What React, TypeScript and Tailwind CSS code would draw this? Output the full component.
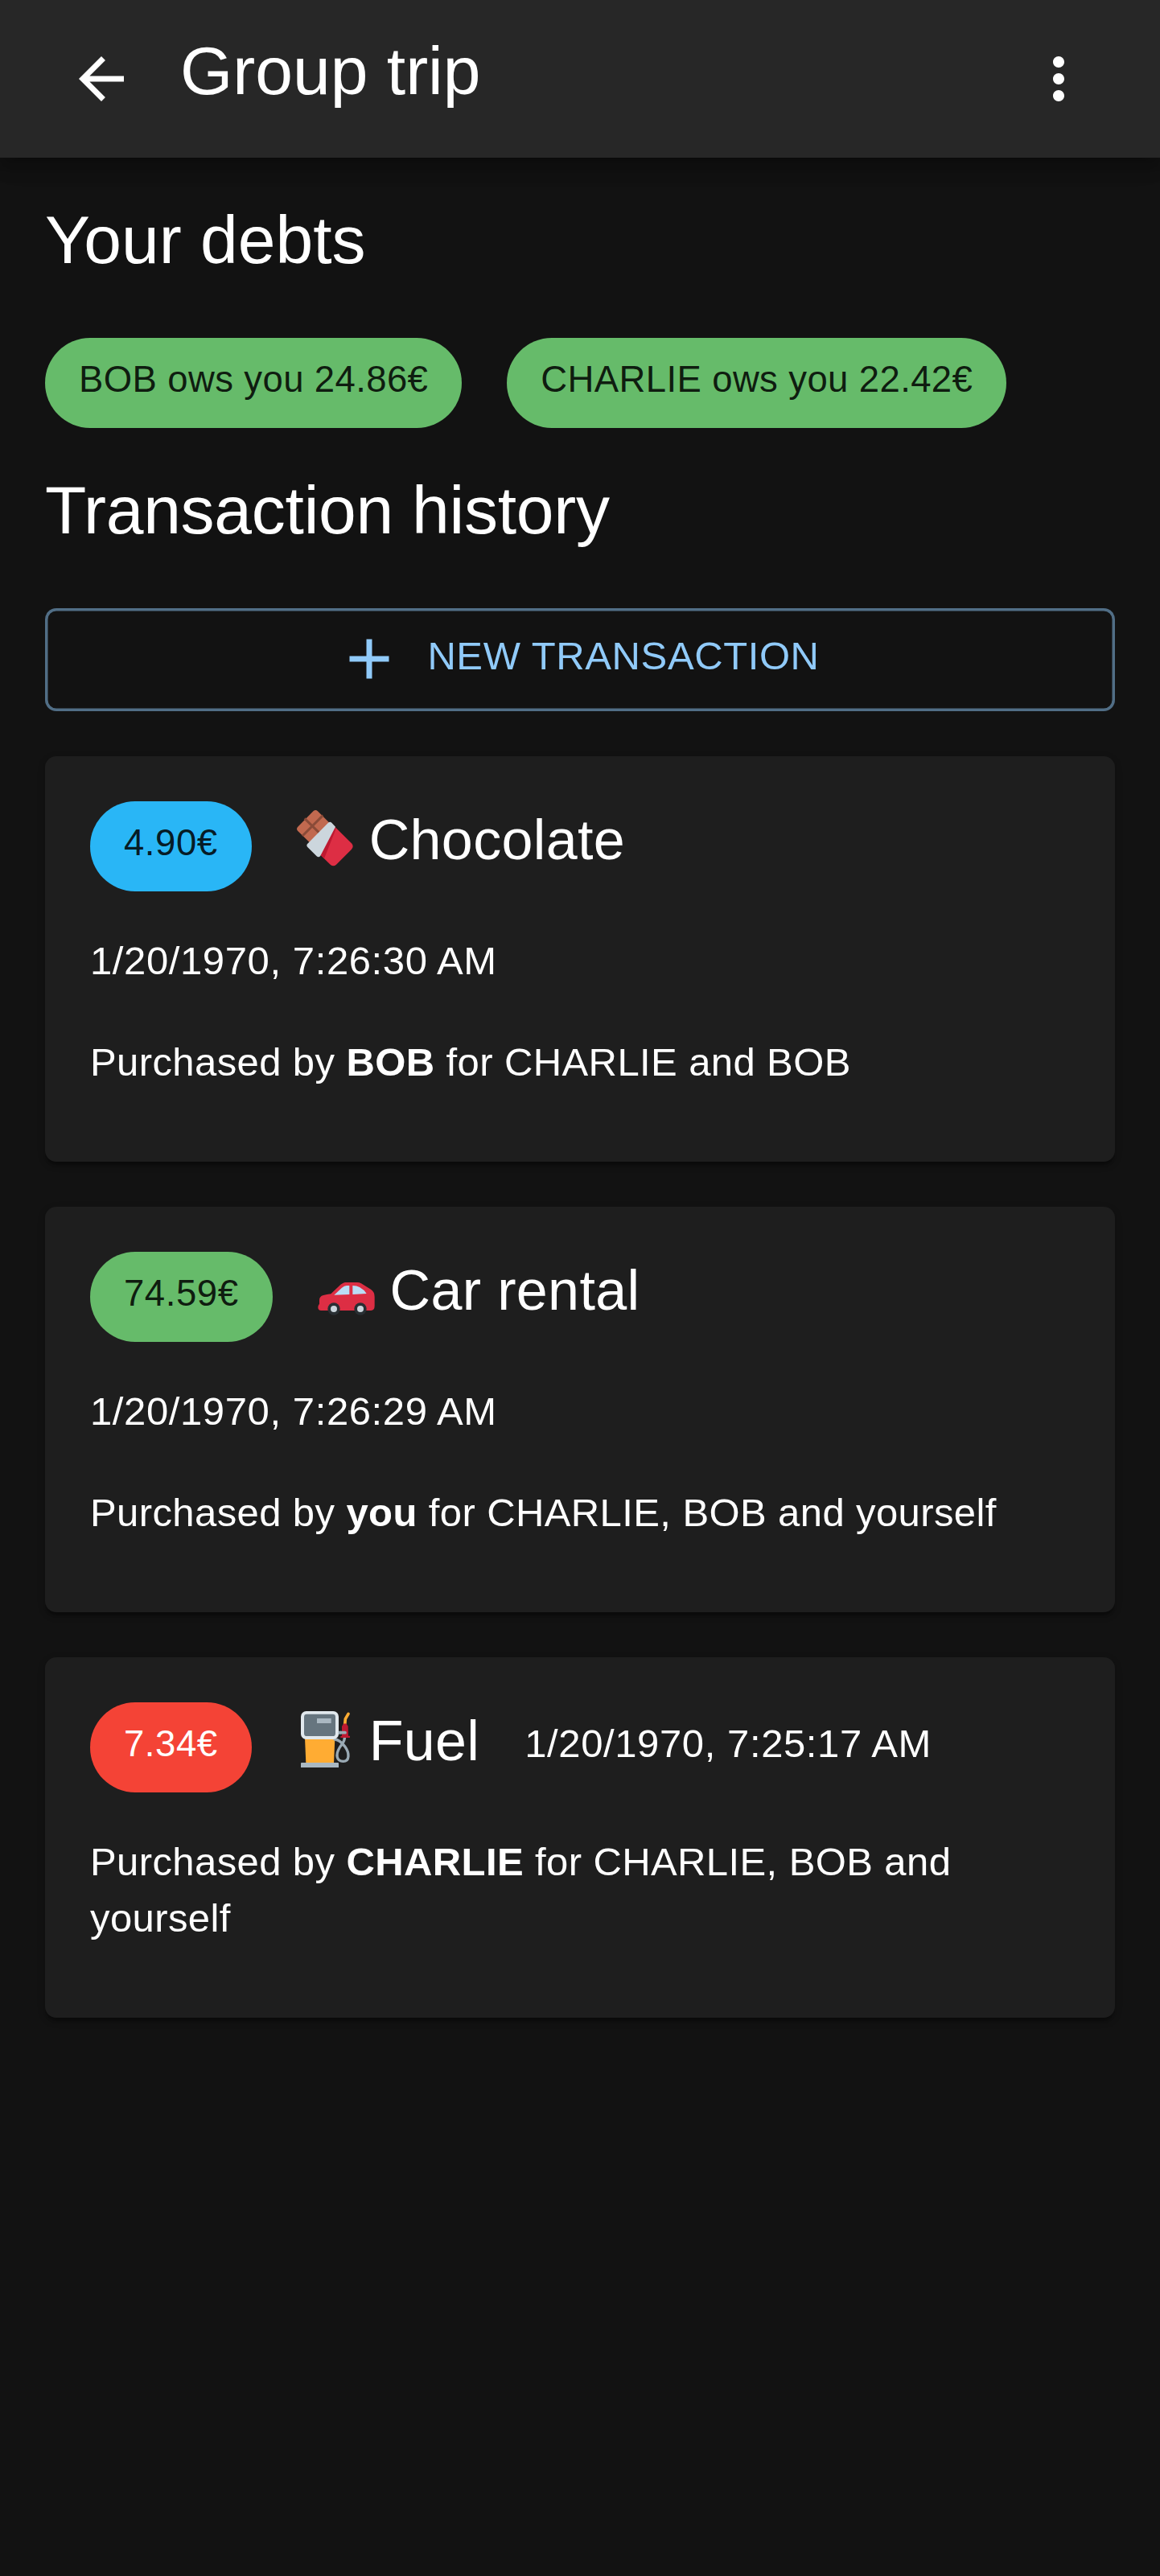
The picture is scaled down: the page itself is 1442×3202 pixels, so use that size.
import type { ReactNode } from "react";

function ArrowBackIcon() {
  return (
    <svg viewBox="0 0 24 24" className="size-[84px] shrink-0 fill-white">
      <path d="M20 11H7.83l5.59-5.59L12 4l-8 8 8 8 1.41-1.41L7.83 13H20v-2z" />
    </svg>
  );
}

function MoreIcon() {
  return (
    <svg viewBox="0 0 24 24" className="size-[84px] shrink-0 fill-white">
      <path d="M12 8c1.1 0 2-.9 2-2s-.9-2-2-2-2 .9-2 2 .9 2 2 2zm0 2c-1.1 0-2 .9-2 2s.9 2 2 2 2-.9 2-2-.9-2-2-2zm0 6c-1.1 0-2 .9-2 2s.9 2 2 2 2-.9 2-2-.9-2-2-2z" />
    </svg>
  );
}

function PlusIcon() {
  return (
    <svg viewBox="0 0 24 24" className="-mt-[2px] size-[84px] shrink-0 fill-[#90caf9]">
      <path d="M19 13h-6v6h-2v-6H5v-2h6V5h2v6h6v2z" />
    </svg>
  );
}

function ChocolateIcon() {
  return (
    <svg viewBox="87 82 210 210" className="size-[70px] shrink-0">
      <path fill="#C1694F" d="M149 85q8-6 15 0l58 58-66 80-66-64q-6-7 0-14z" />
      <path
        fill="none"
        stroke="#8A4B38"
        strokeWidth="9"
        d="M116 113l68 67M184 102l-76 76"
      />
      <path fill="#DD2E44" d="M229 144l62 62q10 11 0 22l-57 57q-11 10-22 0l-40-39z" />
      <path fill="#BE1931" d="M229 144l3 10-43 109-17-17z" />
      <path fill="#CCD6DD" d="M204 129q7-6 13 0l14 15-56 108q-6 9-14 2l-34-34q-6-7 0-13z" />
    </svg>
  );
}

function CarIcon() {
  return (
    <svg viewBox="72 21 210 210" className="size-[70px] shrink-0 overflow-visible">
      <path
        fill="#DD2E44"
        d="M176 102h43q8 0 15 4l36 22q14 9 14 28v34q0 17-14 17H85q-12 0-12-12 0-7 5-13v-14q0-14 15-18 12-3 28-5l30-29q15-14 25-14z"
      />
      <path fill="#BBDDF5" d="M190 114v33l-57 2 29-27q9-8 18-8zM202 114q16 0 26 6 17 9 26 24l-52 3z" />
      <circle cx="132" cy="201" r="23" fill="#292F33" />
      <circle cx="231" cy="201" r="23" fill="#292F33" />
      <circle cx="132" cy="201" r="12" fill="#CCD6DD" />
      <circle cx="231" cy="201" r="12" fill="#CCD6DD" />
    </svg>
  );
}

function FuelPumpIcon() {
  return (
    <svg viewBox="57 81 210 210" className="size-[70px] shrink-0">
      <path fill="#FFAC33" d="M87 180h112l-4 96H91z" />
      <path
        fill="none"
        stroke="#9AAAB4"
        strokeWidth="10"
        strokeLinecap="round"
        d="M198 186c16 1 27 12 39 28 16 22 18 54-7 54s-30-24-13-52c11-18 19-19 19-42"
      />
      <rect x="72" y="81" width="141" height="105" rx="20" fill="#E1E8ED" />
      <rect x="84" y="92" width="117" height="82" rx="10" fill="#66757F" />
      <rect x="132" y="108" width="53" height="18" fill="#AAB8C2" />
      <path fill="#AAB8C2" d="M75 273h135q3 0 3 3v15H72v-15q0-3 3-3z" />
      <path
        fill="none"
        stroke="#FFAC33"
        strokeWidth="11"
        strokeLinecap="round"
        strokeLinejoin="round"
        d="M249 91l-11 19-2 22"
      />
      <path fill="#BE1931" d="M231 128q6-3 11 0l6 9 1 36h6v7h-35v-7h5v-36z" />
      <path stroke="#9AAAB4" strokeWidth="11" strokeLinecap="round" d="M217 161h20" />
      <path stroke="#9AAAB4" strokeWidth="11" d="M213 161h10" />
    </svg>
  );
}

function Heading({ children }: { children: ReactNode }) {
  return <h2 className="-mt-[10px] mb-[10px] text-[84px] leading-[112px]">{children}</h2>;
}

function Chip({ tone, children }: { tone: string; children: ReactNode }) {
  return (
    <span
      className={`flex h-[112px] shrink-0 items-center rounded-[56px] px-[42px] pb-[9px] text-[45.5px] leading-none whitespace-nowrap ${tone}`}
    >
      {children}
    </span>
  );
}

const GREEN = "bg-[#66bb6a] text-black/87";
const BLUE = "bg-[#29b6f6] text-black/87";
const RED = "bg-[#f44336] text-white";

type TransactionProps = {
  amount: string;
  tone: string;
  icon: ReactNode;
  title: string;
  date: string;
  children: ReactNode;
};

function Transaction({ amount, tone, icon, title, date, children }: TransactionProps) {
  return (
    <article className="flex flex-wrap items-center gap-[56px] rounded-[14px] bg-[#1e1e1e] px-[56px] pt-[56px] pb-[84px] tracking-[0.56px] shadow-[0_7px_3.5px_-3.5px_rgba(0,0,0,0.2),0_3.5px_3.5px_0_rgba(0,0,0,0.14),0_3.5px_10.5px_0_rgba(0,0,0,0.12)]">
      <Chip tone={tone}>{amount}</Chip>
      <div className="flex h-[112px] items-start gap-[20px] pt-[11px]">
        {icon}
        <h3 className="-mt-[19px] text-[70px] leading-[112px] tracking-[0.35px] whitespace-nowrap">{title}</h3>
      </div>
      <time className="-mt-[5px] mb-[5px] text-[49px] leading-[70px] tracking-[0.6px] whitespace-nowrap">{date}</time>
      <p className="-mt-[5px] mb-[5px] w-full text-[49px] leading-[70px] tracking-[0.4px]">{children}</p>
    </article>
  );
}

export default function App() {
  return (
    <div className="min-h-[3202px] w-full bg-[#121212] font-['Liberation_Sans',Arial,sans-serif] text-white">
      <header className="flex h-[196px] items-center bg-[#272727] px-[84px] shadow-[0_7px_14px_-3.5px_rgba(0,0,0,0.2),0_14px_17.5px_0_rgba(0,0,0,0.14),0_3.5px_35px_0_rgba(0,0,0,0.12)]">
        <ArrowBackIcon />
        <h1 className="ml-[56px] flex-1 pb-[20px] text-[84px] leading-[112px]">Group trip</h1>
        <MoreIcon />
      </header>

      <main className="flex flex-col gap-[56px] p-[56px]">
        <Heading>Your debts</Heading>
        <div className="flex gap-[56px] tracking-[0.38px]">
          <Chip tone={GREEN}>BOB ows you 24.86€</Chip>
          <Chip tone={GREEN}>CHARLIE ows you 22.42€</Chip>
        </div>

        <Heading>
          <span className="tracking-[-0.25px]">Transaction history</span>
        </Heading>
        <button
          type="button"
          className="flex h-[128px] w-full items-center justify-center gap-[30px] rounded-[14px] pr-[6px] text-[49px] leading-none tracking-[0.6px] text-[#90caf9] shadow-[inset_0_0_0_3.5px_rgba(144,202,249,0.5)]"
        >
          <PlusIcon />
          <span className="pb-[10px]">NEW TRANSACTION</span>
        </button>

        <Transaction
          amount="4.90€"
          tone={BLUE}
          icon={<ChocolateIcon />}
          title="Chocolate"
          date="1/20/1970, 7:26:30 AM"
        >
          Purchased by <b>BOB</b> for CHARLIE and BOB
        </Transaction>
        <Transaction
          amount="74.59€"
          tone={GREEN}
          icon={<CarIcon />}
          title="Car rental"
          date="1/20/1970, 7:26:29 AM"
        >
          Purchased by <b>you</b> for CHARLIE, BOB and yourself
        </Transaction>
        <Transaction
          amount="7.34€"
          tone={RED}
          icon={<FuelPumpIcon />}
          title="Fuel"
          date="1/20/1970, 7:25:17 AM"
        >
          Purchased by <b>CHARLIE</b> for CHARLIE, BOB and yourself
        </Transaction>
      </main>
    </div>
  );
}
